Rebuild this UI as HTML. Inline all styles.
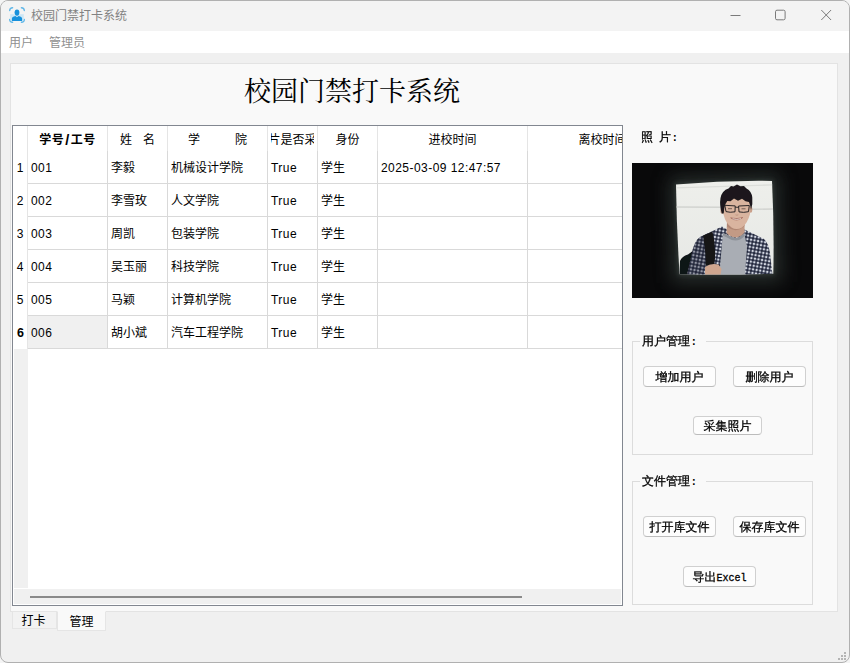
<!DOCTYPE html>
<html lang="zh-CN">
<head>
<meta charset="utf-8">
<title>校园门禁打卡系统</title>
<style>
html,body{margin:0;padding:0;background:#f4f4f4;}
body{width:850px;height:663px;overflow:hidden;position:relative;
  font-family:"Liberation Sans","Noto Sans CJK SC",sans-serif;font-size:12px;color:#000;}
.abs{position:absolute;}
#win{position:absolute;left:0;top:0;width:848px;height:661px;border:1px solid #b0b0b0;
  border-radius:8px;background:#f0f0f0;overflow:hidden;}
/* everything inside #win is positioned relative to (1,1) */
#titlebar{position:absolute;left:0;top:0;width:848px;height:30px;background:#f3f3f3;}
#wtitle{position:absolute;left:30px;top:7px;font-size:12px;line-height:16px;color:#828282;white-space:nowrap;}
#menubar{position:absolute;left:0;top:30px;width:848px;height:22px;background:#fff;}
.menu{position:absolute;top:4px;font-size:12px;line-height:16px;color:#909090;white-space:nowrap;}
#pane{position:absolute;left:9px;top:62px;width:826px;height:547px;border:1px solid #e3e3e3;background:#f9f9f9;}
#bigtitle{position:absolute;left:243px;top:75px;font-family:"Liberation Serif","Noto Serif CJK SC",serif;
  font-size:27px;line-height:32px;white-space:nowrap;color:#000;}
.song{font-family:"Liberation Serif","Noto Serif CJK SC",serif;}
#table{position:absolute;left:11px;top:124px;width:609px;height:479px;border:1px solid #828790;background:#fff;overflow:hidden;}
#table .hs{position:absolute;top:0;height:25px;border-right:1px solid #e5e5e5;overflow:hidden;}
#table .ht{position:absolute;left:3px;right:3px;top:0;height:25px;overflow:hidden;}

#table .hin{position:absolute;left:50%;top:0;transform:translateX(-50%);white-space:nowrap;line-height:29px;}
.b{font-weight:bold;letter-spacing:.5px;}
.sl{font-size:14.5px;padding:0 .9px;line-height:1;position:relative;top:.5px;}
.gap{display:inline-block;width:35px;}
#corner{position:absolute;left:0;top:0;width:14px;height:25px;border-right:1px solid #e5e5e5;background:#fff;}
#vhbg{position:absolute;left:1px;top:223px;width:14px;height:239px;background:#f0f0f0;}
.vh{position:absolute;left:0;width:14px;height:33px;line-height:34px;text-align:center;background:#fff;border-right:1px solid #e5e5e5;white-space:nowrap;}
.vh.sel{font-weight:bold;font-size:12.5px;text-indent:1px;}
.td{position:absolute;height:33px;line-height:34px;border-right:1px solid #d9d9d9;border-bottom:1px solid #d9d9d9;
  box-sizing:border-box;padding-left:3px;white-space:nowrap;overflow:hidden;}
.td.cur{background:#f0f0f0;}
.td.lat{letter-spacing:.45px;}
#hscroll{position:absolute;left:1px;top:463px;width:607px;height:15px;background:#f0f0f0;}
#thumb{position:absolute;left:16px;top:7px;width:492px;height:2px;background:#8a8a8a;}
.lbl{position:absolute;font-family:"Liberation Mono","WenQuanYi Zen Hei",monospace;font-size:12px;line-height:14px;white-space:nowrap;color:#000;-webkit-text-stroke:.3px #000;}
.l{font-size:10px;}
.c{display:inline-block;width:6px;font-weight:bold;font-size:11px;text-indent:.5px;-webkit-text-stroke:0;}
.gb{position:absolute;border:1px solid #dcdcdc;}
.gbt{position:absolute;background:#f9f9f9;padding:0 2px;}
.btn{position:absolute;box-sizing:border-box;height:21px;border:1px solid #d0d0d0;border-bottom-color:#bcbcbc;border-radius:4px;background:#fdfdfd;
  font-family:"Liberation Mono","WenQuanYi Zen Hei",monospace;font-size:12px;line-height:19px;padding-top:2px;text-align:center;white-space:nowrap;color:#000;-webkit-text-stroke:.3px #000;}
.tab{position:absolute;box-sizing:border-box;border:1px solid #e5e5e5;text-align:center;padding-right:2px;white-space:nowrap;font-size:12px;}
</style>
</head>
<body>
<div id="win">
  <div id="titlebar"></div>
  <svg class="abs" style="left:7px;top:5px" width="18" height="18" viewBox="0 0 18 18">
    <g fill="none" stroke="#5fb7e8" stroke-width="1.4" stroke-linecap="round">
      <path d="M1.7 4.6 A3 3 0 0 1 4.6 1.7"/><path d="M13.4 1.7 A3 3 0 0 1 16.3 4.6"/>
      <path d="M16.3 13.4 A3 3 0 0 1 13.4 16.3"/><path d="M4.6 16.3 A3 3 0 0 1 1.7 13.4"/>
    </g>
    <rect x="2.2" y="8.2" width="13.6" height="6.5" fill="#bfe3f6" opacity=".75"/>
    <ellipse cx="9" cy="6.6" rx="2.4" ry="3.1" fill="#1791dc"/>
    <path d="M3.9 14.9 V12.6 C3.9 11 5.2 10.6 7.4 9.9 L9 11.3 L10.6 9.9 C12.8 10.6 14.1 11 14.1 12.6 V14.9 Z" fill="#1791dc"/>
  </svg>
  <div id="wtitle">校园门禁打卡系统</div>
  <svg class="abs" style="left:724px;top:4px" width="120" height="22" viewBox="0 0 120 22">
    <g fill="none" stroke="#7a7a7a" stroke-width="1">
      <path d="M5.500 10.500 H15.500"/>
      <rect x="50.500" y="5.200" width="9.600" height="9.600" rx="1.500"/>
      <path d="M96.300 5 L106.100 15 M106.100 5 L96.300 15"/>
    </g>
  </svg>
  <div id="menubar">
    <div class="menu" style="left:8px">用户</div>
    <div class="menu" style="left:48px">管理员</div>
  </div>
  <div id="pane"></div>
  <div id="bigtitle">校园门禁打卡系统</div>
  <div id="table">
    <div id="vhbg"></div>
    <div id="corner"></div>
<div class="hs" style="left:15px;width:79px"><div class="ht"><div class="hin"><span class="b">学号<span class="sl">/</span>工号</span></div></div></div>
<div class="hs" style="left:95px;width:59px"><div class="ht"><div class="hin">姓<span class="gap" style="width:11px"></span>名</div></div></div>
<div class="hs" style="left:155px;width:99px"><div class="ht"><div class="hin">学<span class="gap"></span>院</div></div></div>
<div class="hs" style="left:255px;width:49px"><div class="ht"><div class="hin">照片是否采集</div></div></div>
<div class="hs" style="left:305px;width:59px"><div class="ht"><div class="hin">身份</div></div></div>
<div class="hs" style="left:365px;width:149px"><div class="ht"><div class="hin">进校时间</div></div></div>
<div class="hs" style="left:515px;width:149px"><div class="ht"><div class="hin">离校时间</div></div></div>
<div class="vh" style="top:25px">1</div>
<div class="td lat" style="left:15px;top:25px;width:80px">001</div>
<div class="td" style="left:95px;top:25px;width:60px">李毅</div>
<div class="td" style="left:155px;top:25px;width:100px">机械设计学院</div>
<div class="td lat" style="left:255px;top:25px;width:50px">True</div>
<div class="td" style="left:305px;top:25px;width:60px">学生</div>
<div class="td lat" style="left:365px;top:25px;width:150px">2025-03-09 12:47:57</div>
<div class="td" style="left:515px;top:25px;width:150px"></div>
<div class="vh" style="top:58px">2</div>
<div class="td lat" style="left:15px;top:58px;width:80px">002</div>
<div class="td" style="left:95px;top:58px;width:60px">李雪玫</div>
<div class="td" style="left:155px;top:58px;width:100px">人文学院</div>
<div class="td lat" style="left:255px;top:58px;width:50px">True</div>
<div class="td" style="left:305px;top:58px;width:60px">学生</div>
<div class="td lat" style="left:365px;top:58px;width:150px"></div>
<div class="td" style="left:515px;top:58px;width:150px"></div>
<div class="vh" style="top:91px">3</div>
<div class="td lat" style="left:15px;top:91px;width:80px">003</div>
<div class="td" style="left:95px;top:91px;width:60px">周凯</div>
<div class="td" style="left:155px;top:91px;width:100px">包装学院</div>
<div class="td lat" style="left:255px;top:91px;width:50px">True</div>
<div class="td" style="left:305px;top:91px;width:60px">学生</div>
<div class="td lat" style="left:365px;top:91px;width:150px"></div>
<div class="td" style="left:515px;top:91px;width:150px"></div>
<div class="vh" style="top:124px">4</div>
<div class="td lat" style="left:15px;top:124px;width:80px">004</div>
<div class="td" style="left:95px;top:124px;width:60px">吴玉丽</div>
<div class="td" style="left:155px;top:124px;width:100px">科技学院</div>
<div class="td lat" style="left:255px;top:124px;width:50px">True</div>
<div class="td" style="left:305px;top:124px;width:60px">学生</div>
<div class="td lat" style="left:365px;top:124px;width:150px"></div>
<div class="td" style="left:515px;top:124px;width:150px"></div>
<div class="vh" style="top:157px">5</div>
<div class="td lat" style="left:15px;top:157px;width:80px">005</div>
<div class="td" style="left:95px;top:157px;width:60px">马颖</div>
<div class="td" style="left:155px;top:157px;width:100px">计算机学院</div>
<div class="td lat" style="left:255px;top:157px;width:50px">True</div>
<div class="td" style="left:305px;top:157px;width:60px">学生</div>
<div class="td lat" style="left:365px;top:157px;width:150px"></div>
<div class="td" style="left:515px;top:157px;width:150px"></div>
<div class="vh sel" style="top:190px">6</div>
<div class="td cur lat" style="left:15px;top:190px;width:80px">006</div>
<div class="td" style="left:95px;top:190px;width:60px">胡小斌</div>
<div class="td" style="left:155px;top:190px;width:100px">汽车工程学院</div>
<div class="td lat" style="left:255px;top:190px;width:50px">True</div>
<div class="td" style="left:305px;top:190px;width:60px">学生</div>
<div class="td lat" style="left:365px;top:190px;width:150px"></div>
<div class="td" style="left:515px;top:190px;width:150px"></div>
    <div id="hscroll"><div id="thumb"></div></div>
  </div>

  <div class="lbl" style="left:640px;top:130px">照<span class="l">&nbsp;</span>片<span class="c">:</span></div>
<svg id="photo" class="abs" style="left:631px;top:162px" width="181" height="135" viewBox="0 0 181 135">
<defs>
  <filter id="gl" x="-60%" y="-60%" width="220%" height="220%"><feGaussianBlur stdDeviation="9"/></filter>
  <filter id="b1" x="-10%" y="-10%" width="120%" height="120%"><feGaussianBlur stdDeviation="0.6"/></filter>
  <filter id="b2" x="-20%" y="-20%" width="140%" height="140%"><feGaussianBlur stdDeviation="2"/></filter>
  <pattern id="plaid" width="3.6" height="3.6" patternUnits="userSpaceOnUse" patternTransform="rotate(10)">
    <rect width="3.6" height="3.6" fill="#4d5369"/>
    <rect width="1.8" height="1.8" fill="#d4d8e1"/>
    <rect x="1.8" y="1.8" width="1.8" height="1.8" fill="#23283a"/>
  </pattern>
  <clipPath id="quad"><path d="M44 21.400 Q92 17.200 140 17.900 Q142.300 64 141.300 110.700 Q94 112.200 47.600 111.200 Q44.600 66 44 21.400 Z"/></clipPath>
  <linearGradient id="wall" x1="0" y1="0" x2="0" y2="1">
    <stop offset="0" stop-color="#eeefeb"/><stop offset="1" stop-color="#e6e8e5"/>
  </linearGradient>
</defs>
<rect width="181" height="135" fill="#09090a"/>
<path d="M37 14 L148 10 L150 119 L40 120 Z" fill="#3e4845" opacity=".55" filter="url(#gl)"/>
<path d="M42.500 19.500 L141.500 16.500 L142.800 112.200 L46 112.700 Z" fill="#59635f" opacity=".3" filter="url(#b2)"/>
<g>
  <path d="M44 21.400 Q92 17.200 140 17.900 Q142.300 64 141.300 110.700 Q94 112.200 47.600 111.200 Q44.600 66 44 21.400 Z" fill="url(#wall)"/>
  <g clip-path="url(#quad)"><g filter="url(#b1)">
    <path d="M44 24.200 L141 21.200 L141 22.600 L44 25.600 Z" fill="#dcdeda"/>
    <path d="M44 43.300 L89 43.500 L89 44.900 L44 44.700 Z" fill="#d2d4d0"/>
    <path d="M120 45.600 L141 45.300 L141 46.700 L120 47 Z" fill="#d2d4d0"/>
    <!-- backpack -->
    <path d="M47.500 112 L48 98 Q50 93 56 91.500 L66 84 L63 112 Z" fill="#111215"/>
    <!-- shirt -->
    <path d="M55 112 L59.500 92 Q62 78 68 74 L90 63.500 L104 72 L112.600 66.500 L132 76 Q136.500 80 138 90 L140.500 112 Z" fill="url(#plaid)"/>
    <path d="M55 112 L59.500 92 Q62 78 68 74 L76 70.500 L70 112 Z" fill="#1d2030" opacity=".35"/>
    <!-- strap -->
    <path d="M71 72.500 L80.500 68.500 Q84.500 84 82.500 101 L73.500 103 Q74 88 71 72.500 Z" fill="#141519"/>
    <!-- t-shirt -->
    <path d="M91 70 L96.500 72.500 Q105 78.500 112.300 70 L115 84 L113 112 L87.500 112 Q89 90 91 70 Z" fill="#a9adb4"/>
    <path d="M91 70 L96.500 72.500 Q105 78.500 112.300 70 L112.600 73 Q105 81 96 75 L90.700 72.500 Z" fill="#8e9299"/>
    <!-- neck -->
    <path d="M95 58 L112.500 57 L112.600 69.500 Q105 78 96.500 72 L94.500 70 Z" fill="#c39a85"/>
    <path d="M95 60 Q104 68.500 112.500 59.500 L112.500 63 Q104 71 95 63.500 Z" fill="#a87e6b" opacity=".7"/>
    <!-- hand -->
    <path d="M73 104 Q79 99.500 86.500 101.500 L89.500 106 L88.500 112 L73 112 Z" fill="#cfa68f"/>
    <!-- ears -->
    <ellipse cx="90.200" cy="47.500" rx="1.800" ry="3.200" fill="#c99f8a"/>
    <ellipse cx="118.700" cy="46.500" rx="1.600" ry="3.200" fill="#c99f8a"/>
    <!-- face -->
    <path d="M91 40 Q92 32 104 31.500 Q117 32 118.300 41 L118 51 Q115.500 60.500 110 64.500 Q104.500 67.500 99.500 64.500 Q93.500 60 91.500 51.500 Z" fill="#d9b49f"/>
    <!-- hair -->
    <path d="M89.800 50.500 Q87.300 42 88.500 35 Q90 27.500 96.500 25.500 L99 23 L101.500 23.500 L105 21.500 L108.500 23.200 L112 23 L114.500 25.500 Q119.500 28 120.300 34.500 Q121 41 119 47 L118.300 43 L117 39 L113.500 38.300 L110 35.800 L106 37.800 L102 35.500 L98.500 38.200 L95.300 38 L93.500 41 L92.300 45 L91.700 50.500 Z" fill="#1a191b"/>
    <!-- glasses -->
    <path d="M92.800 42.300 L103.200 42.900 L103 48.800 Q98 49.800 94 48.600 Z M106.600 43 L117.300 42.500 L116.500 48.700 Q111.500 49.900 107 48.900 Z" fill="none" stroke="#231f21" stroke-width=".95"/>
    <path d="M103.200 44.200 L106.600 44.300" stroke="#231f21" stroke-width=".9"/>
    <path d="M96 45.700 h4 M109.500 45.800 h4" stroke="#4a3a36" stroke-width=".9" opacity=".8"/>
    <!-- nose/mouth -->
    <path d="M103.500 51.800 q1.300 .8 2.800 0" stroke="#b58a76" stroke-width=".7" fill="none"/>
    <path d="M98.600 54.800 Q104.500 59.500 110.800 54.500 Q104.500 56.500 98.600 54.800 Z" fill="#9a5f53" stroke="#9a5f53" stroke-width=".5"/>
    <path d="M100.500 55.700 Q104.500 57.200 109 55.600" stroke="#f1eae5" stroke-width=".8" fill="none"/>
  </g></g>
</g>
</svg>


  <div class="gb" style="left:631px;top:340px;width:179px;height:112px"></div>
  <div class="lbl gbt" style="left:639px;top:334px;width:62px">用户管理<span class="c">:</span></div>
  <div class="btn" style="left:642px;top:365px;width:73px">增加用户</div>
  <div class="btn" style="left:732px;top:365px;width:73px">删除用户</div>
  <div class="btn" style="left:692px;top:415px;width:69px;height:19px;line-height:17px">采集照片</div>

  <div class="gb" style="left:631px;top:480px;width:179px;height:122px"></div>
  <div class="lbl gbt" style="left:639px;top:474px;width:62px">文件管理<span class="c">:</span></div>
  <div class="btn" style="left:642px;top:515px;width:73px">打开库文件</div>
  <div class="btn" style="left:732px;top:515px;width:73px">保存库文件</div>
  <div class="btn" style="left:682px;top:565px;width:73px">导出<span class="l">Excel</span></div>

  <div class="tab" style="left:11px;top:610px;width:45px;height:18px;line-height:19px;background:#f2f2f2;">打卡</div>
  <div class="tab" style="left:56px;top:610px;width:49px;height:20px;line-height:20px;background:#f9f9f9;border-top-color:#f9f9f9;padding-right:0">管理</div>

  <svg class="abs" style="left:833px;top:646px" width="14" height="14" viewBox="0 0 14 14">
    <g fill="#b4b4b4">
      <rect x="10" y="5" width="2" height="2"/><rect x="7" y="8" width="2" height="2"/><rect x="10" y="8" width="2" height="2"/>
      <rect x="4" y="11" width="2" height="2"/><rect x="7" y="11" width="2" height="2"/><rect x="10" y="11" width="2" height="2"/>
    </g>
  </svg>
</div>
</body>
</html>
